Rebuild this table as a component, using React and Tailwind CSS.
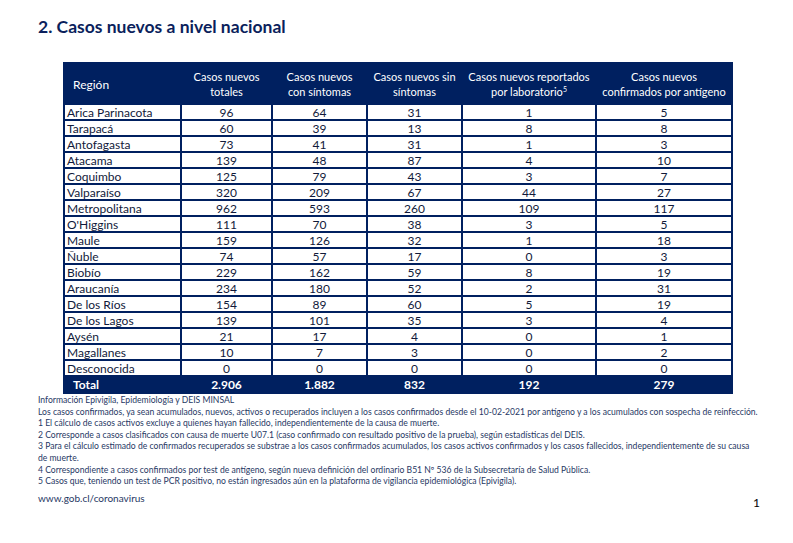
import React from "react";

const rows = [
  ["Arica Parinacota", "96", "64", "31", "1", "5"],
  ["Tarapacá", "60", "39", "13", "8", "8"],
  ["Antofagasta", "73", "41", "31", "1", "3"],
  ["Atacama", "139", "48", "87", "4", "10"],
  ["Coquimbo", "125", "79", "43", "3", "7"],
  ["Valparaíso", "320", "209", "67", "44", "27"],
  ["Metropolitana", "962", "593", "260", "109", "117"],
  ["O'Higgins", "111", "70", "38", "3", "5"],
  ["Maule", "159", "126", "32", "1", "18"],
  ["Ñuble", "74", "57", "17", "0", "3"],
  ["Biobío", "229", "162", "59", "8", "19"],
  ["Araucanía", "234", "180", "52", "2", "31"],
  ["De los Ríos", "154", "89", "60", "5", "19"],
  ["De los Lagos", "139", "101", "35", "3", "4"],
  ["Aysén", "21", "17", "4", "0", "1"],
  ["Magallanes", "10", "7", "3", "0", "2"],
  ["Desconocida", "0", "0", "0", "0", "0"],
];

const th = "font-normal text-center leading-[15px] border-2 border-[#002060] whitespace-nowrap";
const td = "border-2 border-[#002060] p-0";

export default function App() {
  return (
    <div className="w-[793px] h-[543px] bg-white relative overflow-hidden font-['Lato','Open_Sans',sans-serif]">
      <div className="pl-[38px] pt-[16px]">
        <h1 className="text-[17.5px] leading-[22px] font-bold text-[#0b1f5c]">
          2. Casos nuevos a nivel nacional
        </h1>
      </div>
      <div className="ml-[63px] mt-[24px]">
        <table className="table-fixed border-collapse text-[12px] text-[#111a3a]">
          <colgroup>
            <col className="w-[117px]" />
            <col className="w-[91px]" />
            <col className="w-[95px]" />
            <col className="w-[95px]" />
            <col className="w-[134px]" />
            <col className="w-[136px]" />
          </colgroup>
          <thead>
            <tr className="bg-[#002060] text-white h-[41px] text-[11px]">
              <th className="font-normal text-[12px] text-left pl-[8px] leading-[14px] border-2 border-[#002060] pt-[2px]">Región</th>
              <th className={th}>Casos nuevos<br />totales</th>
              <th className={th}>Casos nuevos<br />con síntomas</th>
              <th className={th}>Casos nuevos sin<br />síntomas</th>
              <th className={th}>
                Casos nuevos reportados<br />por laboratorio<span className="text-[7px] leading-[7px] relative top-[-4px]">5</span>
              </th>
              <th className={th}>Casos nuevos<br />confirmados por antígeno</th>
            </tr>
          </thead>
          <tbody>
            {rows.map((r, i) => (
              <tr key={i} className="h-[16px] leading-[13px]">
                {r.map((c, j) => (
                  <td key={j} className={j === 0 ? td + " text-left pl-[2px]" : td + " text-center"}>
                    {c}
                  </td>
                ))}
              </tr>
            ))}
            <tr className="bg-[#002060] text-white font-bold h-[17px] leading-[13px]">
              <td className={td + " text-left pl-[8px]"}>Total</td>
              <td className={td + " text-center"}>2.906</td>
              <td className={td + " text-center"}>1.882</td>
              <td className={td + " text-center"}>832</td>
              <td className={td + " text-center"}>192</td>
              <td className={td + " text-center"}>279</td>
            </tr>
          </tbody>
        </table>
      </div>
      <div className="pl-[38px] pt-[1px] text-[8.6px] leading-[11.6px] text-[#1f3864]">
        <p>Información Epivigila, Epidemiología y DEIS MINSAL</p>
        <p className="whitespace-nowrap">Los casos confirmados, ya sean acumulados, nuevos, activos o recuperados incluyen a los casos confirmados desde el 10-02-2021 por antígeno y a los acumulados con sospecha de reinfección.</p>
        <p>1 El cálculo de casos activos excluye a quienes hayan fallecido, independientemente de la causa de muerte.</p>
        <p>2 Corresponde a casos clasificados con causa de muerte U07.1 (caso confirmado con resultado positivo de la prueba), según estadísticas del DEIS.</p>
        <p className="pr-[40px]">3 Para el cálculo estimado de confirmados recuperados se substrae a los casos confirmados acumulados, los casos activos confirmados y los casos fallecidos, independientemente de su causa de muerte.</p>
        <p>4 Correspondiente a casos confirmados por test de antígeno, según nueva definición del ordinario B51 Nº 536 de la Subsecretaría de Salud Pública.</p>
        <p>5 Casos que, teniendo un test de PCR positivo, no están ingresados aún en la plataforma de vigilancia epidemiológica (Epivigila).</p>
      </div>
      <div className="pl-[38px] pr-[33px] mt-[4px] flex justify-between items-start">
        <span className="text-[10px] leading-[12px] text-[#1f3864]">www.gob.cl/coronavirus</span>
        <span className="text-[12px] leading-[14px] text-black mt-[4px]">1</span>
      </div>
    </div>
  );
}
